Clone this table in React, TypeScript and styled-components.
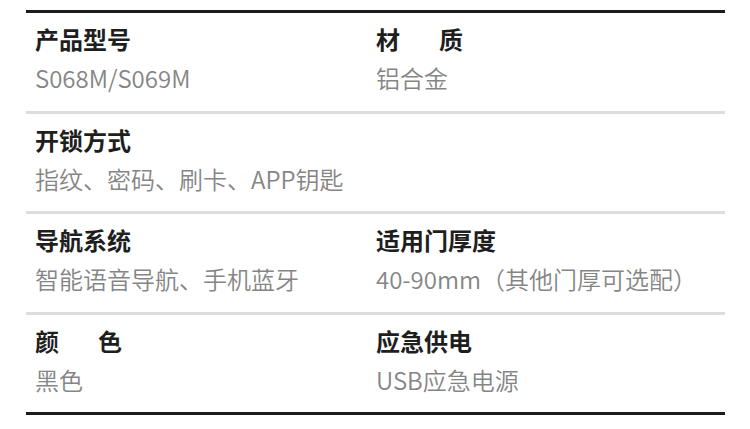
import styled, { createGlobalStyle } from "styled-components";

const GlobalStyle = createGlobalStyle`
  html, body {
    margin: 0;
    padding: 0;
    background: #fff;
  }
  body {
    font-family: "Noto Sans CJK SC", "Noto Sans", sans-serif;
  }
`;

type Spec = {
  title: string;
  value: string;
  spread?: boolean;
};

const rows: Spec[][] = [
  [
    { title: "产品型号", value: "S068M/S069M" },
    { title: "材质", value: "铝合金", spread: true },
  ],
  [{ title: "开锁方式", value: "指纹、密码、刷卡、APP钥匙" }],
  [
    { title: "导航系统", value: "智能语音导航、手机蓝牙" },
    { title: "适用门厚度", value: "40-90mm（其他门厚可选配）" },
  ],
  [
    { title: "颜色", value: "黑色", spread: true },
    { title: "应急供电", value: "USB应急电源" },
  ],
];

const Page = styled.div`
  padding: 10px 25px 0 26px;
`;

const Table = styled.div`
  border-top: 3px solid #1c1c1c;
  border-bottom: 3px solid #1c1c1c;
`;

const Row = styled.div`
  display: grid;
  grid-template-columns: 341px 1fr;
  padding: 6px 0 13.5px 9px;

  & + & {
    border-top: 3px solid #dddddd;
  }
`;

const Cell = styled.div`
  display: flex;
  flex-direction: column;
`;

const Title = styled.div<{ $spread?: boolean }>`
  font-size: 24px;
  line-height: 40px;
  font-weight: 700;
  color: #1e1e1e;
  letter-spacing: ${(p) => (p.$spread ? "39px" : "0")};
  white-space: nowrap;
`;

const Value = styled.div`
  font-size: 24px;
  line-height: 38px;
  font-weight: 350;
  color: #858585;
  white-space: nowrap;
`;

export default function App() {
  return (
    <>
      <GlobalStyle />
      <Page>
        <Table>
          {rows.map((row, i) => (
            <Row key={i}>
              {row.map((item) => (
                <Cell key={item.title}>
                  <Title $spread={item.spread}>{item.title}</Title>
                  <Value>{item.value}</Value>
                </Cell>
              ))}
            </Row>
          ))}
        </Table>
      </Page>
    </>
  );
}
